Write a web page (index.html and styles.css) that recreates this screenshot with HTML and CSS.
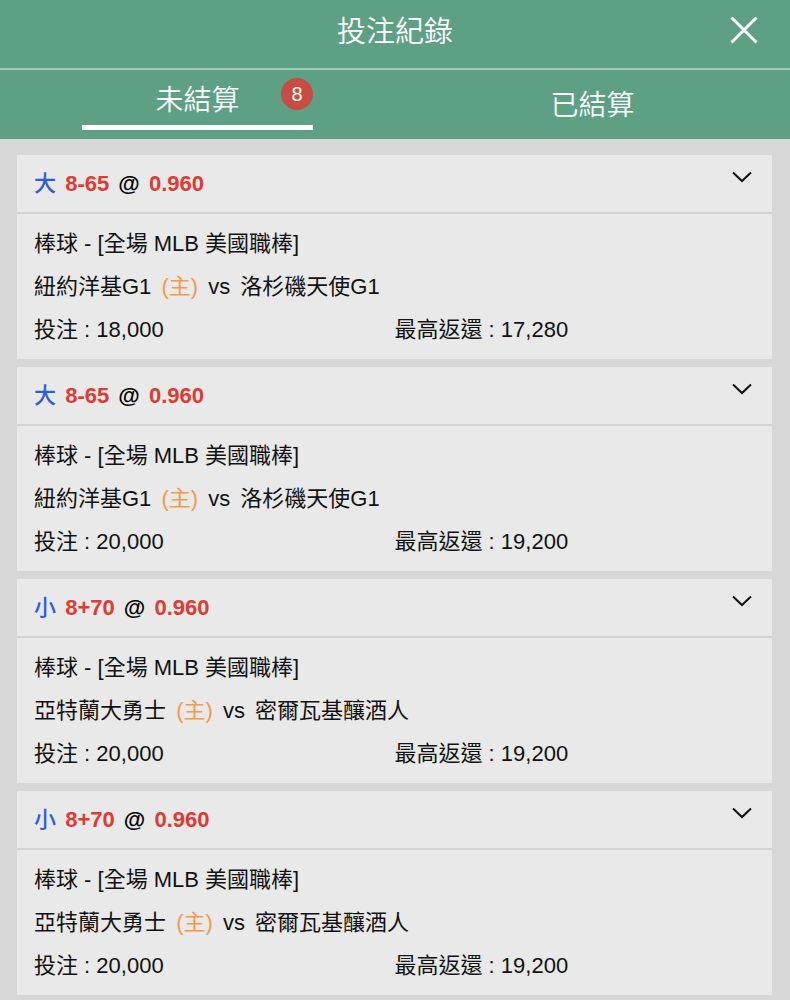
FILE: index.html
```
<!DOCTYPE html>
<html lang="zh-Hant">
<head>
  <meta charset="UTF-8">
  <title>投注紀錄</title>
  <meta name="viewport" content="width=device-width, initial-scale=1.0">
  <link rel="stylesheet" href="styles.css">
</head>

<body>
  <header class="header">
    <h1 class="title">投注紀錄</h1>
    <button class="close-btn" type="button" aria-label="關閉">
      <svg width="28" height="28" viewBox="0 0 28 28"><path d="M1.5 1.5L26.5 26.5M26.5 1.5L1.5 26.5"/></svg>
    </button>
  </header>

  <nav class="tabs">
    <button class="tab active" type="button">
      <span class="tab-label">未結算<span class="badge">8</span></span>
    </button>
    <button class="tab" type="button">已結算</button>
  </nav>

  <main class="bets">
    <article class="bet">
      <div class="bet-header">
        <h2 class="pick"><span class="side">大</span> <span class="odds">8-65</span> <span class="at">@</span> <span class="odds">0.960</span></h2>
        <button class="toggle" type="button" aria-label="展開">
          <svg width="20" height="12" viewBox="0 0 20 12"><path d="M1 1.5L10 10L19 1.5"/></svg>
        </button>
      </div>
      <div class="bet-body">
        <p>棒球 - [全場 MLB 美國職棒]</p>
        <p>紐約洋基G1 <span class="home">(主)</span> vs <span class="away">洛杉磯天使G1</span></p>
        <div class="amounts">
          <p>投注 : 18,000</p>
          <p>最高返還 : 17,280</p>
        </div>
      </div>
    </article>

    <article class="bet">
      <div class="bet-header">
        <h2 class="pick"><span class="side">大</span> <span class="odds">8-65</span> <span class="at">@</span> <span class="odds">0.960</span></h2>
        <button class="toggle" type="button" aria-label="展開">
          <svg width="20" height="12" viewBox="0 0 20 12"><path d="M1 1.5L10 10L19 1.5"/></svg>
        </button>
      </div>
      <div class="bet-body">
        <p>棒球 - [全場 MLB 美國職棒]</p>
        <p>紐約洋基G1 <span class="home">(主)</span> vs <span class="away">洛杉磯天使G1</span></p>
        <div class="amounts">
          <p>投注 : 20,000</p>
          <p>最高返還 : 19,200</p>
        </div>
      </div>
    </article>

    <article class="bet">
      <div class="bet-header">
        <h2 class="pick"><span class="side">小</span> <span class="odds">8+70</span> <span class="at">@</span> <span class="odds">0.960</span></h2>
        <button class="toggle" type="button" aria-label="展開">
          <svg width="20" height="12" viewBox="0 0 20 12"><path d="M1 1.5L10 10L19 1.5"/></svg>
        </button>
      </div>
      <div class="bet-body">
        <p>棒球 - [全場 MLB 美國職棒]</p>
        <p>亞特蘭大勇士 <span class="home">(主)</span> vs <span class="away">密爾瓦基釀酒人</span></p>
        <div class="amounts">
          <p>投注 : 20,000</p>
          <p>最高返還 : 19,200</p>
        </div>
      </div>
    </article>

    <article class="bet">
      <div class="bet-header">
        <h2 class="pick"><span class="side">小</span> <span class="odds">8+70</span> <span class="at">@</span> <span class="odds">0.960</span></h2>
        <button class="toggle" type="button" aria-label="展開">
          <svg width="20" height="12" viewBox="0 0 20 12"><path d="M1 1.5L10 10L19 1.5"/></svg>
        </button>
      </div>
      <div class="bet-body">
        <p>棒球 - [全場 MLB 美國職棒]</p>
        <p>亞特蘭大勇士 <span class="home">(主)</span> vs <span class="away">密爾瓦基釀酒人</span></p>
        <div class="amounts">
          <p>投注 : 20,000</p>
          <p>最高返還 : 19,200</p>
        </div>
      </div>
    </article>
  </main>
</body>
</html>
```
FILE: styles.css
```
* {
  box-sizing: border-box;
}

body {
  margin: 0;
  font-family: "Liberation Sans", "Noto Sans CJK TC", sans-serif;
  font-size: 22px;
  color: #111;
  background: #d7d7d7;
}

h1, h2, p {
  margin: 0;
}

button {
  padding: 0;
  border: none;
  background: none;
  color: inherit;
  font-family: inherit;
  cursor: pointer;
}

svg {
  display: block;
  fill: none;
  stroke: currentColor;
}

/* Header */
.header {
  display: grid;
  grid-template-columns: 60px 1fr 60px;
  align-items: center;
  padding-bottom: 8px;
  border-bottom: 2px solid #9dcbb5;
  background: #5da084;
  color: #fff;
}

.title {
  grid-column: 2;
  padding-top: 4px;
  font-size: 29px;
  font-weight: 350;
  line-height: 56px;
  text-align: center;
}

.close-btn svg {
  stroke-width: 3;
}

/* Tabs */
.tabs {
  display: grid;
  grid-template-columns: 1fr 1fr;
  background: #5da084;
  color: #fff;
}

.tab {
  padding: 12px 0 9px;
  font-size: 28px;
  font-weight: 350;
  line-height: 48px;
}

.tab.active {
  padding-top: 7px;
}

.tab-label {
  position: relative;
  display: block;
  width: 231px;
  margin: 0 auto;
  border-bottom: 5px solid #fff;
}

.badge {
  position: absolute;
  top: 1px;
  right: 0;
  width: 32px;
  height: 32px;
  border-radius: 50%;
  background: #c94c43;
  font-size: 20px;
  font-weight: 400;
  line-height: 32px;
}

/* Bet cards */
.bets {
  display: flex;
  flex-direction: column;
  gap: 8px;
  padding: 16px 18px 5px 17px;
}

.bet {
  background: #e9e9e9;
}

.bet-header {
  display: flex;
  justify-content: space-between;
  align-items: flex-start;
  padding: 8px 20px 7px 17px;
  border-bottom: 2px solid #d3d3d3;
}

.pick {
  font-size: 22px;
  font-weight: 700;
  line-height: 42px;
  color: #000;
}

.side {
  margin-right: 3px;
  font-weight: 500;
  color: #2f5be0;
}

.odds {
  color: #de3b34;
}

.at {
  margin: 0 3px;
}

.toggle {
  padding-top: 8px;
}

.toggle svg {
  stroke-width: 2;
}

.bet-body {
  padding: 8px 17px;
  line-height: 43px;
}

.bet-body p {
  white-space: nowrap;
}

.home {
  margin: 0 4px;
  color: #f49a48;
}

.away {
  margin-left: 4px;
}

.amounts {
  display: grid;
  grid-template-columns: 1fr 1fr;
}
```
